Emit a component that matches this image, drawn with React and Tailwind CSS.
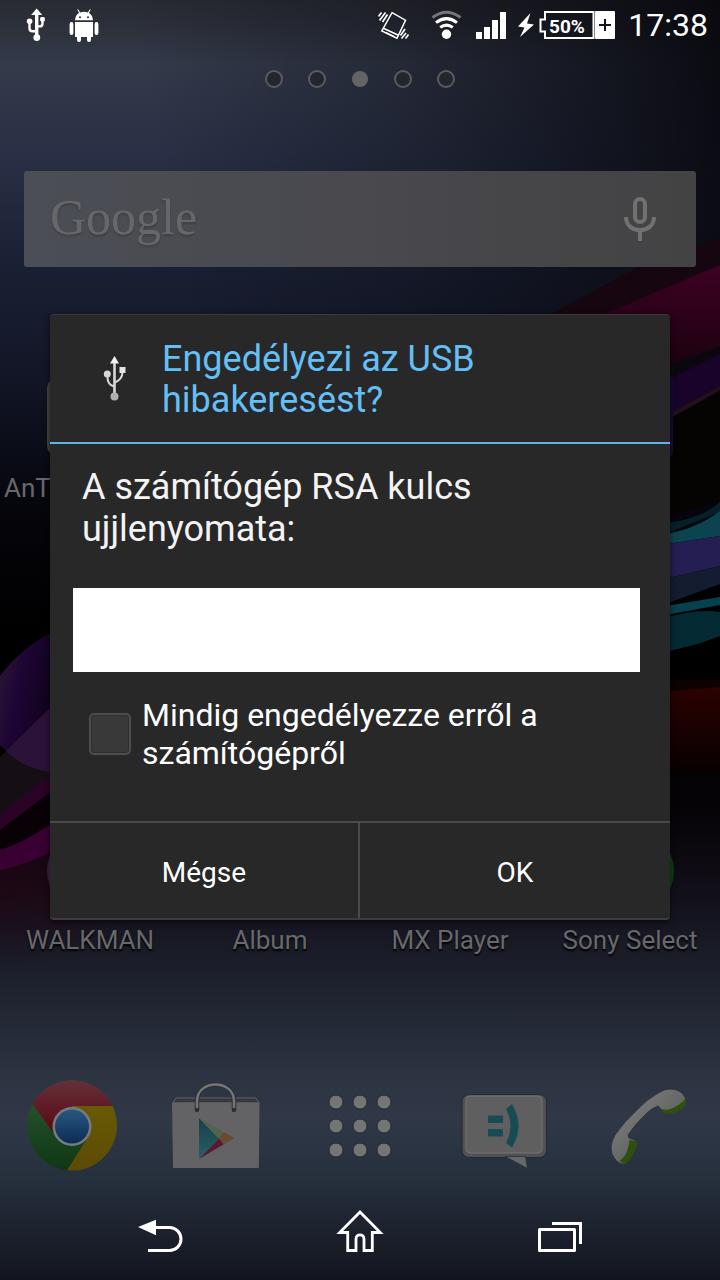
import React from "react";

function Wallpaper() {
  return (
    <svg
      className="absolute inset-0 h-full w-full"
      viewBox="0 0 720 1280"
      preserveAspectRatio="none"
      aria-hidden="true"
    >
      <defs>
        <linearGradient id="sky" x1="0" y1="0" x2="0" y2="1">
          <stop offset="0" stopColor="#292b32" />
          <stop offset="0.02" stopColor="#2c303a" />
          <stop offset="0.05" stopColor="#333a4a" />
          <stop offset="0.12" stopColor="#293045" />
          <stop offset="0.21" stopColor="#1a2033" />
          <stop offset="0.29" stopColor="#121627" />
          <stop offset="0.4" stopColor="#05050b" />
          <stop offset="0.5" stopColor="#000000" />
          <stop offset="0.63" stopColor="#050306" />
          <stop offset="0.68" stopColor="#0e0b13" />
          <stop offset="0.73" stopColor="#171824" />
          <stop offset="0.78" stopColor="#1f2430" />
          <stop offset="0.84" stopColor="#2c3341" />
          <stop offset="0.875" stopColor="#303847" />
          <stop offset="0.92" stopColor="#26303d" />
          <stop offset="0.96" stopColor="#1c222e" />
          <stop offset="1" stopColor="#12151e" />
        </linearGradient>
        <linearGradient id="shade" x1="0.2" y1="0.1" x2="1" y2="0">
          <stop offset="0" stopColor="#08080f" stopOpacity="0" />
          <stop offset="0.4" stopColor="#08080f" stopOpacity="0.3" />
          <stop offset="0.7" stopColor="#08080f" stopOpacity="0.62" />
          <stop offset="1" stopColor="#08080d" stopOpacity="0.95" />
        </linearGradient>
        <linearGradient id="fade" x1="0" y1="0" x2="0" y2="1">
          <stop offset="0" stopColor="#fff" />
          <stop offset="0.75" stopColor="#fff" />
          <stop offset="1" stopColor="#000" />
        </linearGradient>
        <mask id="upper">
          <rect width="720" height="460" fill="url(#fade)" />
        </mask>
        <linearGradient id="violet" x1="0" y1="0" x2="1" y2="0.5">
          <stop offset="0" stopColor="#2c1b35" />
          <stop offset="0.4" stopColor="#1e0535" />
          <stop offset="1" stopColor="#0d0218" />
        </linearGradient>
        <linearGradient id="crimson" x1="0" y1="0" x2="0" y2="1">
          <stop offset="0" stopColor="#3d0122" />
          <stop offset="1" stopColor="#1c0210" />
        </linearGradient>
        <linearGradient id="red" x1="0" y1="0" x2="0" y2="1">
          <stop offset="0" stopColor="#2b0202" />
          <stop offset="1" stopColor="#080000" />
        </linearGradient>
        <radialGradient id="wine">
          <stop offset="0" stopColor="#240313" stopOpacity="0.7" />
          <stop offset="1" stopColor="#240313" stopOpacity="0" />
        </radialGradient>
      </defs>
      <rect width="720" height="1280" fill="url(#sky)" />
      <rect width="720" height="460" fill="url(#shade)" mask="url(#upper)" />
      <path d="M540 320 L640 266 L720 238 V340 H540Z" fill="#16060f" />
      <path d="M600 316 L640 299 L720 265 V351 L670 365 H600Z" fill="url(#crimson)" />
      <path d="M660 368 L720 346 V358 L660 384Z" fill="#0b0710" />
      <path d="M660 384 L720 354 V386 L660 418Z" fill="#19032a" />
      <path d="M660 419 L720 386 V390 L660 424Z" fill="#25101a" />
      <path d="M660 424 L720 391 V502 L660 518Z" fill="#050402" />
      <path d="M660 524 Q700 520 720 502 V512 L660 536Z" fill="#05202a" />
      <path d="M660 535 Q695 530 720 511 V536 L660 545Z" fill="#0b4450" />
      <path d="M660 545 L720 536 V566 L660 580Z" fill="#241e52" />
      <path d="M660 580 L720 566 V584 L660 606Z" fill="#131c30" />
      <path d="M660 607 L720 597 V605 L660 616Z" fill="#06414e" />
      <path d="M660 619 Q700 608 720 612 V636 Q690 648 660 652Z" fill="#042a34" />
      <path d="M660 680 H720 V690 H660Z" fill="#0d0101" />
      <path d="M660 692 L720 687 V772 H660Z" fill="url(#red)" />
      <ellipse cx="0" cy="880" rx="150" ry="90" fill="url(#wine)" />
      <path d="M0 676 Q22 646 60 628 V776 Q25 770 0 745Z" fill="url(#violet)" />
      <path d="M6 751 L60 698 V776 Q22 770 6 751Z" fill="#2a1238" />
      <path d="M0 757 L6 751 Q25 770 56 773 L0 815Z" fill="#150f15" />
      <path d="M0 815 L56 769 V788 L0 830Z" fill="#2b0326" />
      <path d="M0 830 L56 788 V822 Q26 842 0 850Z" fill="#080207" />
      <path d="M0 850 Q26 842 56 820 V849 Q25 866 0 870Z" fill="#380132" />
      <rect x="47" y="377" width="86" height="80" rx="12" fill="#444445" />
      <circle cx="90" cy="871" r="43" fill="#392342" />
      <circle cx="630" cy="871" r="44" fill="#123d14" />
      <rect x="600" y="374" width="73" height="84" rx="6" fill="#160a35" />
    </svg>
  );
}

function StatusBar() {
  return (
    <header className="relative flex h-[50px] items-center pl-[26px] pr-3 text-white">
      <svg className="h-[34px] w-5" viewBox="26 8 20 34" fill="none" stroke="#fff" strokeWidth="2.4" aria-label="USB">
        <path d="M36.7 13V38" strokeWidth="3.4" />
        <path d="M29.5 21v7.2q0 3 3 3h4M42.5 20v3.4q0 3-3 3h-3" />
        <path d="M36.7 8.6l5.6 6.4H31.1z" fill="#fff" stroke="none" />
        <circle cx="29.6" cy="21.3" r="2.8" fill="#fff" stroke="none" />
        <rect x="40.2" y="17" width="4.6" height="4.6" rx="1.4" fill="#fff" stroke="none" />
        <circle cx="36.8" cy="37.6" r="3.4" fill="#fff" stroke="none" />
      </svg>
      <svg className="ml-[22px] h-[34px] w-8" viewBox="68 8 32 34" fill="#fff" aria-label="Android">
        <path d="M75 20.2c.2-4 2.4-6.300 4.200-7.400l-2-3 .9-.6 2.200 3.200q3.600-1.300 7.400 0l2.200-3.200.9.600-2 3c2 1.200 4 3.600 4.200 7.400z" />
        <path d="M75 22h18v15H75z" />
        <rect x="69.600" y="22" width="3.800" height="13" rx="1.900" />
        <rect x="94.600" y="22" width="3.800" height="13" rx="1.900" />
        <rect x="77" y="33" width="4" height="9" rx="2" />
        <rect x="87" y="33" width="4" height="9" rx="2" />
        <circle cx="80" cy="17.300" r="1" fill="#2d313b" />
        <circle cx="88" cy="17.300" r="1" fill="#2d313b" />
      </svg>
      <div className="ml-auto flex items-center">
        <svg className="h-[34px] w-8" viewBox="378 8 32 34" fill="none" stroke="#fff" strokeWidth="1.500" aria-label="Rezgés">
          <path d="M392 12.700l13.500 7.500L397 38.200 381.800 31z" />
          <path d="M383.400 28.200l15 7M386 32.600l8 4" />
          <path d="M378.500 16.500l3-4M379.500 20.500l6-8M382.500 22l5-7.500M400.500 35.500l4.500-6.500M401.500 38.500l4.500-5.500M405.500 38.500l3-4" strokeWidth="1.700" />
        </svg>
        <svg className="ml-5 h-[34px] w-8" viewBox="430 8 32 34" fill="none" stroke="#fff" strokeWidth="3" aria-label="Wi-Fi">
          <path d="M432.500 17.500q14-10.500 28 0" stroke="#74767b" />
          <path d="M436 22.600q10.500-8 21 0" />
          <path d="M440.200 27.400q6.300-4.600 12.600 0" />
          <circle cx="446.500" cy="34.300" r="4.700" fill="#fff" stroke="none" />
        </svg>
        <svg className="ml-[14px] h-[34px] w-[30px]" viewBox="476 8 30 34" fill="#fff" aria-label="Térerő">
          <path d="M476 32h6v7h-6zM484 27h6v12h-6zM492 20h6v19h-6zM500 12h6v27h-6z" />
        </svg>
        <svg className="ml-3 h-[34px] w-[98px]" viewBox="518 8 98 34" aria-label="Akkumulátor 50%">
          <path d="M530.500 13l-12.500 13.500 6.500 1-4.500 9.500 14-12.500-7-1z" fill="#fff" />
          <path d="M545 12h48.500v26H545v-6.500h-4.500v-12h4.500z" fill="none" stroke="#fff" strokeWidth="2" />
          <rect x="595" y="11" width="20" height="28" rx="1" fill="#fff" />
          <path d="M599 25h12M605 19v12" stroke="#14151c" strokeWidth="2" />
          <text x="549" y="32.500" fill="#fff" fontSize="19" fontWeight="700" fontFamily="Roboto, sans-serif">50%</text>
        </svg>
        <time className="ml-3 text-[32px] leading-[50px]">17:38</time>
      </div>
    </header>
  );
}

function PageDots() {
  return (
    <div className="relative mt-5 flex items-center justify-center gap-[25px]">
      {[0, 1, 2, 3, 4].map((i) =>
        i === 2 ? (
          <span key={i} className="mx-px h-4 w-4 rounded-full bg-[#646464]" />
        ) : (
          <span key={i} className="h-[18px] w-[18px] rounded-full border-2 border-[#5a5b5f] bg-[#23262e]" />
        )
      )}
    </div>
  );
}

function SearchBar() {
  return (
    <div className="relative mx-6 mt-[83px] flex h-24 items-center justify-between rounded-[3px] bg-linear-to-r from-[#4b4e55] via-[#49494e] to-[#434344] pl-[26px] pr-9">
      <a href="#search" className="pb-1 font-['Liberation_Serif',serif] text-[50px] leading-none text-[#66676a] [text-shadow:0_2px_2px_#3f4045]">
        Google
      </a>
      <button type="button" aria-label="Hangalapú keresés">
        <svg className="h-12 w-10" viewBox="620 195 40 48" fill="none" stroke="#717172" strokeWidth="4">
          <rect x="635" y="199" width="10" height="23" rx="5" />
          <path d="M626 217c0 17.500 28 17.500 28 0M640 231v10" />
        </svg>
      </button>
    </div>
  );
}

function Dock() {
  const item = "flex justify-center";
  const icon = "h-24 w-24";
  return (
    <nav className="relative grid grid-cols-5">
      <button type="button" className={item} aria-label="Chrome">
        <svg className={icon} viewBox="24 1078 96 96">
          <defs>
            <linearGradient id="cr" x1="0" y1="0" x2="0" y2="1"><stop offset="0" stopColor="#64303a" /><stop offset="1" stopColor="#5b0712" /></linearGradient>
            <linearGradient id="cg" x1="0" y1="0" x2="0" y2="1"><stop offset="0" stopColor="#2b5a32" /><stop offset="1" stopColor="#0f3715" /></linearGradient>
            <linearGradient id="cy" x1="0" y1="0" x2="0" y2="1"><stop offset="0" stopColor="#685a05" /><stop offset="1" stopColor="#5c4a04" /></linearGradient>
            <linearGradient id="cb" x1="0" y1="0" x2="0" y2="1"><stop offset="0" stopColor="#285781" /><stop offset="1" stopColor="#0c2d54" /></linearGradient>
          </defs>
          <circle cx="72" cy="1125.500" r="45" fill="url(#cg)" />
          <path d="M72 1106H112.500A45 45 0 0 1 67 1170.300L90 1134Z" fill="url(#cy)" />
          <path d="M32.500 1104A45 45 0 0 1 112.500 1106H72L53 1132Z" fill="url(#cr)" />
          <circle cx="72" cy="1126.500" r="19.500" fill="#777b80" />
          <circle cx="72" cy="1126.500" r="17" fill="url(#cb)" />
        </svg>
      </button>
      <button type="button" className={item} aria-label="Play Áruház">
        <svg className={icon} viewBox="168 1078 96 96">
          <defs>
            <linearGradient id="pt" x1="0" y1="0" x2="0" y2="1"><stop offset="0" stopColor="#1a3d49" /><stop offset="1" stopColor="#28606a" /></linearGradient>
          </defs>
          <path d="M176 1098h80l3 5h-86z" fill="#36383c" stroke="#606164" strokeWidth="1" />
          <path d="M172 1102.500h87.500l-.7 65.500H173z" fill="#636365" />
          <path d="M197 1110v-9c0-22 37-22 37 0v9" fill="none" stroke="#2d2f33" strokeWidth="4.500" strokeLinecap="round" />
          <path d="M197 1108v-7c0-22 37-22 37 0v7" fill="none" stroke="#747578" strokeWidth="2.500" />
          <path d="M199 1118l20 20.500-20 20.500z" fill="url(#pt)" />
          <path d="M199 1118l24.500 14-4.500 7z" fill="#52644e" />
          <path d="M223.500 1132l11 6-11 6.500-4.500-5.500z" fill="#6b4a32" />
          <path d="M199 1159l20-20.500 4.500 6z" fill="#591a31" />
        </svg>
      </button>
      <button type="button" className={item} aria-label="Alkalmazások">
        <svg className={icon} viewBox="312 1078 96 96" fill="#747575" stroke="#272a31" strokeWidth="1">
          {[1102, 1126, 1150].map((y) => [336, 360, 384].map((x) => <circle key={x + "-" + y} cx={x} cy={y} r="7" />))}
        </svg>
      </button>
      <button type="button" className={item} aria-label="Üzenetek">
        <svg className={icon} viewBox="456 1078 96 96">
          <rect x="462" y="1094.500" width="84.500" height="63" rx="7" fill="#505154" stroke="#26292f" />
          <path d="M505 1156.500l22.500 12-2-12z" fill="#666769" stroke="#252930" strokeWidth=".7" />
          <rect x="466" y="1096" width="76" height="57" rx="4" fill="#5f5f60" stroke="#747475" />
          <path d="M488 1115.500h15v7.500h-15zM488 1129h15v7.500h-15z" fill="#194b55" />
          <path d="M506 1109l6-5q13 21.500 0 43.500l-6-4.500q9-17 0-34z" fill="#194b55" />
        </svg>
      </button>
      <button type="button" className={item} aria-label="Telefon">
        <svg className={icon} viewBox="600 1078 96 96">
          <defs>
            <linearGradient id="ph" x1="0" y1="0" x2="1" y2="1"><stop offset="0" stopColor="#858585" /><stop offset="1" stopColor="#4c4d4e" /></linearGradient>
          </defs>
          <path
            d="M670 1089q7 0 12 4 4 4 4 9-1 6-11 11-7 1-12 0-2-5-5-7-6 2-11 7-11 10-19 22l1 3q5 1 8 4 0 4-2 8-3 8-10 14-5 1-10-5-4-4-4-12 1-7 4-12 9-13 22-25 10-11 23-18 5-3 10-3z"
            fill="url(#ph)"
            stroke="#2b2f36"
            strokeWidth=".8"
          />
          <path d="M661 1109q6 2 12-1 7-3 12.500-9.500 1.500 5-1 8-4 4-9.500 6.500-6 1-11.500 0z" fill="#2f500d" />
          <path d="M629.500 1140q5 0 7.500 2.500 0 4-2 8-3 8-9.500 13.500-3 0-6-3.500 5-3 7.500-9 2-6 2.500-11.500z" fill="#2f500d" />
        </svg>
      </button>
    </nav>
  );
}

function SystemNav() {
  const item = "flex w-[200px] items-center justify-center";
  return (
    <nav className="relative flex h-24 items-center justify-center pt-1">
      <button type="button" className={item} aria-label="Vissza">
        <svg className="h-12 w-12" viewBox="136 1210 48 48" fill="none" stroke="#fff" strokeWidth="3">
          <path d="M155 1227.500h14.500a11.500 11.500 0 0 1 0 23H148" />
          <path d="M138 1227l18-7.200v15.400z" fill="#fff" stroke="none" />
        </svg>
      </button>
      <button type="button" className={item} aria-label="Kezdőképernyő">
        <svg className="h-12 w-12" viewBox="336 1210 48 48" fill="none" stroke="#fff" strokeWidth="2.800">
          <path d="M360 1212l20.300 20.500h-8v18H364v-11.500c0-5.500-8-5.500-8 0v11.500h-8.300v-18h-8z" />
        </svg>
      </button>
      <button type="button" className={item} aria-label="Legutóbbi alkalmazások">
        <svg className="h-12 w-12" viewBox="536 1210 48 48" fill="none" stroke="#fff" strokeWidth="3" strokeLinejoin="round">
          <path d="M539.500 1229.500h35v21h-35z" />
          <path d="M552 1223.500h28.500v20.500" strokeLinejoin="miter" />
        </svg>
      </button>
    </nav>
  );
}

function UsbDialog() {
  return (
    <div className="absolute inset-x-0 bottom-24 top-[50px] flex items-center justify-center px-[50px]">
      <section
        role="dialog"
        aria-labelledby="usb-title"
        className="w-full max-w-[620px] overflow-hidden rounded-[4px] border-b-2 border-t border-b-[#3d3d3d] border-t-[#3a3a3a] bg-[#282828] shadow-[0_2px_6px_rgba(0,0,0,0.6)]"
      >
        <div className="flex items-center border-b-2 border-[#5fb4e8] px-8 pb-[21px] pt-6">
          <svg className="h-12 w-16" viewBox="82 356 64 48" fill="none" stroke="#d8d8d8" strokeWidth="2" aria-hidden="true">
            <path d="M114.500 360v36" strokeWidth="2.600" />
            <path d="M107.500 374v3.500q0 7 6.500 9M122.500 370v2q0 7-7.500 10.500" />
            <path d="M114.500 356l4.500 7.500h-9z" fill="#f2f2f2" stroke="none" />
            <circle cx="107.300" cy="374" r="3.500" fill="#d8d8d8" stroke="none" />
            <path d="M119.500 367h6v6h-6z" fill="#e4e4e4" stroke="none" />
            <circle cx="114.500" cy="396.500" r="4" fill="#b0b0b0" stroke="none" />
          </svg>
          <h1 id="usb-title" className="ml-4 flex-1 text-[36px] leading-[41px] text-[#64bff5]">
            Engedélyezi az USB
            <br />
            hibakeresést?
          </h1>
        </div>
        <p className="px-8 pt-[22px] text-[36px] leading-[42px] text-[#f3f3f3]">
          A számítógép RSA kulcs
          <br />
          ujjlenyomata:
        </p>
        <div className="ml-[23px] mr-[30px] mt-[38px] h-[84px] bg-white" />
        <label className="mb-[49px] mt-6 flex items-center gap-[11px] pl-[39px] text-[32px] leading-[38px] text-white">
          <input
            type="checkbox"
            className="h-[42px] w-[42px] shrink-0 appearance-none rounded-[5px] border-2 border-[#4d4d4d] bg-[#393939] shadow-[inset_0_0_0_1px_#2f2f2f] checked:bg-[#64bff5]"
          />
          <span>
            Mindig engedélyezze erről a
            <br />
            számítógépről
          </span>
        </label>
        <div className="grid grid-cols-2 border-t-2 border-[#4a4a4a] text-[28px] text-white">
          <button type="button" className="h-[95px] border-r-2 border-[#4a4a4a] pt-1">Mégse</button>
          <button type="button" className="h-[95px] pt-1">OK</button>
        </div>
      </section>
    </div>
  );
}

export default function App() {
  const labels = ["WALKMAN", "Album", "MX Player", "Sony Select"];
  return (
    <main className="relative flex min-h-screen flex-col overflow-hidden bg-black font-[Roboto,sans-serif]">
      <Wallpaper />
      <StatusBar />
      <PageDots />
      <SearchBar />
      <p className="relative mt-[205px] pl-1 text-[26px] leading-8 text-[#68686c]">AnT</p>
      <div className="relative mt-[420px] grid grid-cols-4 whitespace-nowrap text-center text-[26px] leading-8 text-[#68686b] [text-shadow:0_2px_2px_#000]">
        {labels.map((label) => (
          <span key={label}>{label}</span>
        ))}
      </div>
      <div className="relative mt-auto pb-[10px]">
        <Dock />
      </div>
      <SystemNav />
      <UsbDialog />
    </main>
  );
}
